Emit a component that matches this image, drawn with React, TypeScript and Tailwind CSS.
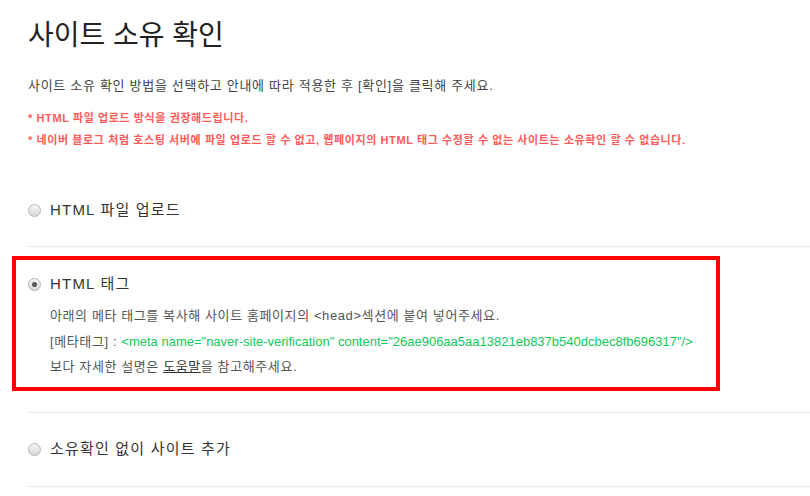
import React from 'react';

const font = { fontFamily: '"Liberation Sans", "Noto Sans CJK KR", sans-serif' };

const Radio: React.FC<{ checked?: boolean }> = ({ checked }) => (
  <span className="relative inline-flex w-[13px] h-[13px] shrink-0 rounded-full border border-[#b5b5b5] bg-gradient-to-b from-[#f4f4f4] to-[#d8d8d8] items-center justify-center">
    {checked && <span className="w-[5px] h-[5px] rounded-full bg-[#555]" />}
  </span>
);

const App: React.FC = () => {
  return (
    <div className="w-[810px] h-[496px] bg-white overflow-hidden pl-[28px]" style={font}>
      <h1 className="pt-[18px] text-[28px] leading-[36px] text-[#222]">사이트 소유 확인</h1>
      <p className="mt-[23px] text-[13px] leading-[18px] text-[#444] tracking-[0.7px]">
        사이트 소유 확인 방법을 선택하고 안내에 따라 적용한 후 [확인]을 클릭해 주세요.
      </p>
      <div className="mt-[12px] text-[11px] leading-[22px] text-[#ff5a5a] font-bold tracking-[0.6px]">
        <p>* HTML 파일 업로드 방식을 권장해드립니다.</p>
        <p>* 네이버 블로그 처럼 호스팅 서버에 파일 업로드 할 수 없고, 웹페이지의 HTML 태그 수정할 수 없는 사이트는 소유확인 할 수 없습니다.</p>
      </div>

      <div className="mt-[23px]">
        <div className="h-[73px] flex items-center gap-[9px] border-b border-[#eaeaea] text-[15px] text-[#333] tracking-[1.2px]">
          <Radio />
          <span>HTML 파일 업로드</span>
        </div>

        <div className="relative h-[166px] border-b border-[#eaeaea] pt-[27px]">
          <div className="flex items-center gap-[9px] h-[20px] text-[15px] text-[#333] tracking-[1.2px]">
            <Radio checked />
            <span>HTML 태그</span>
          </div>
          <div className="pl-[22px] mt-[9px] text-[13px] leading-[25.5px] text-[#555]">
            <p className="tracking-[0.6px]">아래의 메타 태그를 복사해 사이트 홈페이지의 &lt;head&gt;섹션에 붙여 넣어주세요.</p>
            <p>
              <span className="tracking-[0.6px]">[메타태그] : </span>
              <span className="text-[#12c85a]">
                &lt;meta name="naver-site-verification" content="26ae906aa5aa13821eb837b540dcbec8fb696317"/&gt;
              </span>
            </p>
            <p className="tracking-[0.6px]">
              보다 자세한 설명은 <span className="underline text-[#333]">도움말</span>을 참고해주세요.
            </p>
          </div>
          <div className="absolute left-[-16px] top-[9px] w-[708px] h-[135px] border-4 border-[#ff0000] pointer-events-none" />
        </div>

        <div className="h-[74px] flex items-center gap-[9px] border-b border-[#eaeaea] text-[15px] text-[#333] tracking-[1.2px]">
          <Radio />
          <span>소유확인 없이 사이트 추가</span>
        </div>
      </div>
    </div>
  );
};

export default App;
